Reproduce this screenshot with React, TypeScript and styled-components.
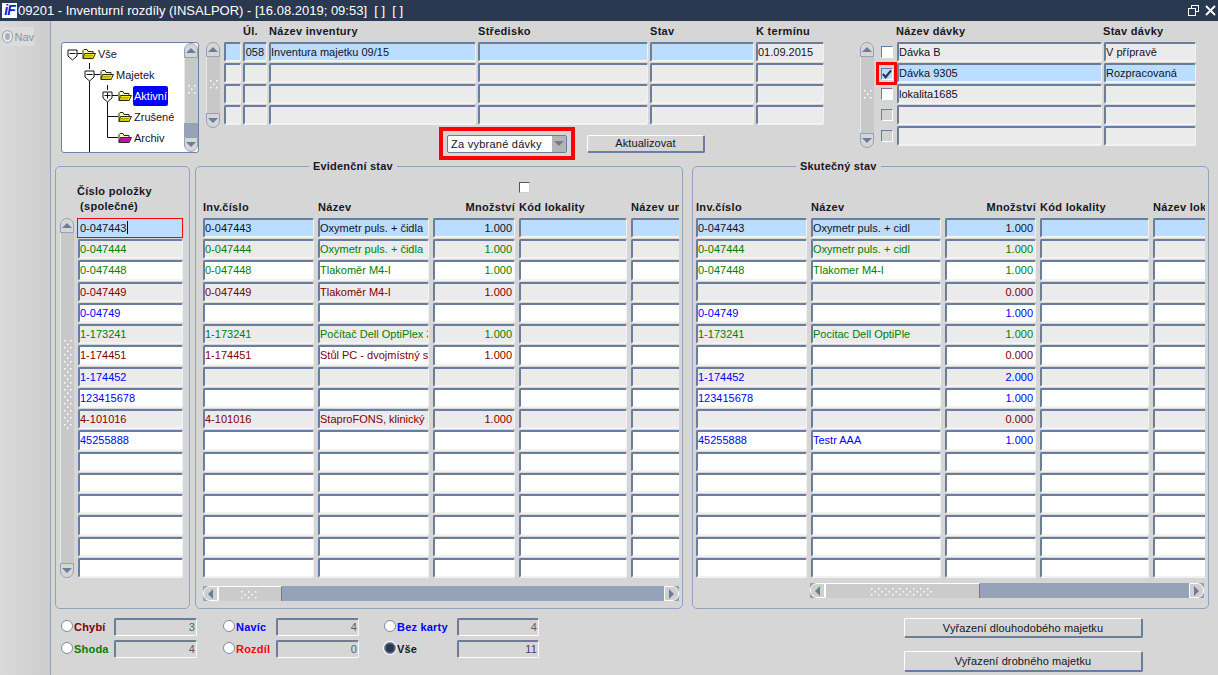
import React from "react";
import styled, { createGlobalStyle } from "styled-components";

const Global = createGlobalStyle`
  html, body { margin: 0; padding: 0; background: #d6d6d6; overflow: hidden; }
  body { font-family: "Liberation Sans", Arial, sans-serif; font-size: 11px; color: #12121e; }
  * { box-sizing: border-box; }
`;

const Frame = styled.div`width: 1218px; height: 675px; display: flex; flex-direction: column; overflow: hidden;`;

const TitleBar = styled.header`
  height: 21px; background: #2a3950; color: #fff; display: flex; align-items: center;
  padding: 0 2px 0 2px; font-size: 13px; white-space: pre;
`;
const Logo = styled.span`
  width: 15px; height: 15px; background: #fff; color: #0a1fd0; font: italic 700 14px/15px "Liberation Sans", sans-serif;
  text-align: center; margin-right: 1px; letter-spacing: -1px; overflow: hidden;
`;
const TitleText = styled.span`flex: 1;`;
const WinIcons = styled.div`display: flex; align-items: center; gap: 6px;`;

const Body = styled.div`flex: 1; display: flex; min-height: 0;`;
const Sidebar = styled.aside`
  width: 51px; background: linear-gradient(90deg, #d9d9d9, #cdcdcd); border-right: 1px solid #93a2b8; padding: 6px 0 0 2px;
`;
const NavItem = styled.div`
  width: 32px; height: 19px; background: #dcdcdc; display: flex; align-items: center; gap: 2px; color: #8593aa; padding-left: 1px;
`;
const NavDot = styled.span`
  width: 11px; height: 11px; border-radius: 50%; background: #a9b1bd; border: 2px solid #e9e9e9; box-shadow: 0 0 0 1px #a0a8b4;
`;

const Main = styled.main`flex: 1; padding-left: 4px; min-width: 0;`;
const Top = styled.section`height: 138px; display: flex; align-items: flex-start; padding-left: 6px;`;

const Tree = styled.div`
  position: relative; width: 138px; height: 111px; margin-top: 21px; background: #fff; border: 1px solid #6f819d; border-radius: 3px;
  display: flex; overflow: hidden;
`;
const TreeList = styled.div`flex: 1;`;
const TreeRow = styled.div<{ $depth: number }>`
  height: 21px; display: flex; align-items: center; gap: 1px; padding-left: ${p => 20 + p.$depth * 18}px; position: relative; z-index: 1;
`;
const TreeLabel = styled.span<{ $active?: boolean }>`
  font-size: 11px; line-height: 20px; height: 20px; padding: 0 1px; border-radius: 2px;
  background: ${p => (p.$active ? "#0000ff" : "transparent")}; color: ${p => (p.$active ? "#fff" : "#14141e")};
`;
const TreeLines = styled.svg`position: absolute; left: 0; top: 0; z-index: 2; pointer-events: none;`;

const Center = styled.div`width: 619px; margin-left: 7px; display: flex; flex-direction: column;`;
const Batches = styled.div`width: 337px; margin-left: 35px;`;
const HeadRow = styled.div<{ $cols: string; $gap?: number; $ml?: number }>`
  display: grid; grid-template-columns: ${p => p.$cols}; column-gap: ${p => p.$gap ?? 4}px; margin-left: ${p => p.$ml ?? 0}px;
  overflow: hidden; white-space: nowrap; height: 14px; line-height: 14px;
`;
const TopHead = styled(HeadRow)`margin-top: 3px; margin-bottom: 4px;`;
const ColTitle = styled.span<{ $right?: boolean }>`
  font-weight: 700; font-size: 11px; letter-spacing: 0.3px; color: #17171f; text-align: ${p => (p.$right ? "right" : "left")};
`;
const WithBar = styled.div<{ $gap: number }>`display: flex; align-items: flex-start; gap: ${p => p.$gap}px;`;
const Rows = styled.div<{ $cols: string; $gap?: number; $rowGap?: number }>`
  display: grid; grid-template-columns: ${p => p.$cols}; column-gap: ${p => p.$gap ?? 4}px; row-gap: ${p => p.$rowGap ?? 1}px;
  grid-auto-rows: 20px; overflow: hidden;
`;
const BatchRows = styled(Rows)`overflow: visible;`;
const TallRows = styled(Rows)`height: 360px; grid-auto-rows: 1fr; row-gap: 1.2px;`;
const ItemRows = styled(TallRows)`overflow: visible;`;

type Tone = "sel" | "gray" | "white" | "focus";
const toneBg: Record<Tone, string> = { sel: "#bbddff", gray: "#ebebeb", white: "#ffffff", focus: "#bbddff" };
const Cell = styled.div<{ $tone: Tone; $color?: string; $right?: boolean }>`
  background: ${p => toneBg[p.$tone]}; color: ${p => p.$color ?? "#12121e"};
  border-style: solid; border-width: 2px 1px 2px 2px; border-radius: 2px;
  border-color: #6a7d9b #f2f2f2 #f2f2f2 #6a7d9b;
  padding: 0 2px 0 0; font-size: 11px; line-height: 16px; white-space: nowrap; overflow: hidden;
  text-align: ${p => (p.$right ? "right" : "left")}; min-width: 0;
  ${p => p.$tone === "focus" ? "border: 1px solid #ff0000; border-radius: 0; padding: 1px 2px; line-height: 16px; margin-left: -1px;" : ""}
`;
const Caret = styled.span`display: inline-block; width: 1px; height: 13px; background: #000; vertical-align: -2px;`;

const Actions = styled.div`display: flex; align-items: center; margin: -1px 0 0 233px;`;
const RedFrame = styled.div`
  width: 136px; height: 33px; border: 4px solid #ff0000; display: flex; align-items: center; justify-content: center; background: #d6d6d6;
`;
const Select = styled.div`
  width: 120px; height: 18px; background: #fff; border: 1px solid #6a7d9b; border-radius: 2px; display: flex; align-items: center;
  padding-left: 3px; font-size: 11px; letter-spacing: 0.25px;
`;
const SelectText = styled.span`flex: 1;`;
const SelectArrow = styled.span`
  width: 14px; height: 100%; background: #b4b4b4; display: flex; align-items: center; justify-content: center;
`;
const Button = styled.button<{ $w: number; $h: number }>`
  width: ${p => p.$w}px; height: ${p => p.$h}px; background: #d6d6d6; color: #14141e; padding: 0;
  font: 11px "Liberation Sans", Arial, sans-serif; letter-spacing: 0.1px;
  border-style: solid; border-width: 1px 2px 2px 1px; border-color: #fff #6a7d9b #6a7d9b #fff; border-radius: 2px;
`;
const UpdateButton = styled(Button)`margin-left: 12px;`;

const CheckCol = styled.div`display: flex; align-items: center; justify-content: center; height: 20px; position: relative;`;
const RedCheck = styled.div`
  position: absolute; left: -3px; top: -1px; width: 21px; height: 23px; border: 3px solid #ff0000;
  display: flex; align-items: center; justify-content: center;
`;
const Check = styled.span<{ $off?: boolean; $sel?: boolean }>`
  width: 12px; height: 12px; display: inline-flex; align-items: center; justify-content: center;
  background: ${p => (p.$off ? "#d2d2d2" : p.$sel ? "#bbddff" : "#fff")};
  border-style: solid; border-width: 1px; border-color: #6a7d9b #fff #fff #6a7d9b;
`;

const PanelRow = styled.div`display: flex; height: 450px;`;
const Panel = styled.fieldset<{ $w: number; $ml?: number; $pl: number }>`
  width: ${p => p.$w}px; margin: 0 0 0 ${p => p.$ml ?? 0}px; padding: 0 0 0 ${p => p.$pl}px; min-width: 0;
  border: 1px solid #93a2b8; border-radius: 5px; height: 450px;
`;
const Legend = styled.legend<{ $left?: number }>`
  height: 14px; line-height: 15px; margin-left: ${p => p.$left ?? 0}px; padding: 0 ${p => (p.$left ? 4 : 0)}px;
  font-weight: 700; font-size: 11px; letter-spacing: 0.2px; color: #17171f;
`;
const PanelHead = styled.div`height: 45px; display: flex; flex-direction: column; justify-content: flex-end; padding-bottom: 4px;`;
const ItemHead = styled.div`
  margin-left: 17px; font-weight: 700; font-size: 11px; letter-spacing: 0.3px; line-height: 15px; color: #17171f;
`;
const ItemSub = styled.div`margin-left: 3px;`;
const HeadCheck = styled.span`
  width: 11px; height: 11px; background: #fff; border: 1px solid #555; border-right-color: #ccc; border-bottom-color: #ccc; margin: 0 0 7px 316px; display: block;
`;
const Clip = styled.div<{ $w: number }>`width: ${p => p.$w}px; overflow: hidden;`;

const HBar = styled.div<{ $w: number; $mt: number; $ml?: number }>`
  width: ${p => p.$w}px; height: 15px; margin: ${p => p.$mt}px 0 0 ${p => p.$ml ?? 0}px; background: #94a3b8; display: flex;
`;
const HBtn = styled.span<{ $side: "l" | "r" }>`
  width: 15px; background: #cfcfcf; display: flex; align-items: center; justify-content: center;
  border: 1px solid #fff; ${p => (p.$side === "l" ? "border-radius: 7px 0 0 7px;" : "border-radius: 0 7px 7px 0; margin-left: auto;")}
`;
const HThumb = styled.span<{ $w: number }>`
  width: ${p => p.$w}px; background: #cbcbcb; border-top: 1px solid #fff; border-left: 1px solid #fff; border-right: 1px solid #6a7d9b;
  display: flex; align-items: center; justify-content: center;
`;

const VBar = styled.div<{ $h: number }>`width: 14px; height: ${p => p.$h}px; display: flex; flex-direction: column; flex: none;`;
const VBtn = styled.span<{ $side: "u" | "d" }>`
  height: 15px; flex: none; background: #d6d6d6; display: flex; align-items: center; justify-content: center;
  border: 1px solid #93a2b8; ${p => (p.$side === "u" ? "border-radius: 7px 7px 0 0;" : "border-radius: 0 0 7px 7px;")}
`;
const VThumb = styled.span<{ $lift?: number }>`
  flex: 1; background: #c8c8c8; display: flex; align-items: center; justify-content: center; border-left: 1px solid #e8e8e8;
  padding-bottom: ${p => p.$lift ?? 0}px;
`;
const VRest = styled.span<{ $h: number }>`height: ${p => p.$h}px; background: #94a3b8; flex: none;`;
const TreeBar = styled.div`margin: 0 0 0 auto;`;

const Bottom = styled.section`display: flex; align-items: flex-start; padding: 9px 0 0 6px;`;
const Stats = styled.div`display: grid; grid-template-columns: 162px 161px 155px; row-gap: 4px; grid-auto-rows: 18px;`;
const Stat = styled.div`display: flex; align-items: center;`;
const Radio = styled.span<{ $on?: boolean }>`
  width: 12px; height: 12px; border-radius: 50%; flex: none; background: ${p => (p.$on ? "#2a3950" : "#fff")}; margin-bottom: 2px;
  border: 1px solid #7c8ba3; ${p => (p.$on ? "box-shadow: inset 0 0 0 1px #55647c, 0 0 0 1px #fff;" : "")}
`;
const StatLabel = styled.span<{ $color: string; $w: number }>`
  width: ${p => p.$w}px; margin: 0 0 1px 1px; color: ${p => p.$color}; font-weight: 700; font-size: 11px; letter-spacing: 0.2px;
`;
const StatValue = styled.span<{ $color?: string }>`
  width: 83px; height: 18px; text-align: right; padding-right: 1px; line-height: 14px; color: ${p => p.$color ?? "#5c5c66"};
  border-style: solid; border-width: 2px 1px 1px 2px; border-color: #6a7d9b #fff #fff #6a7d9b; border-radius: 2px; letter-spacing: 0.2px;
`;
const ActionStack = styled.div`display: flex; flex-direction: column; gap: 13px; margin-left: 365px;`;

const Arrow = ({ dir }: { dir: "u" | "d" | "l" | "r" }) => {
  const pts = { u: "0,6 10,6 5,1", d: "0,1 10,1 5,6", l: "6,0 6,10 1,5", r: "1,0 1,10 6,5" }[dir];
  const horiz = dir === "l" || dir === "r";
  return (
    <svg width={horiz ? 7 : 10} height={horiz ? 10 : 7} viewBox={horiz ? "0 0 7 10" : "0 0 10 7"}>
      <polygon points={pts} fill="#6a7d9b" />
    </svg>
  );
};

const Grip = ({ n, horizontal }: { n: number; horizontal?: boolean }) => {
  const dots: React.ReactElement[] = [];
  for (let i = 0; i < n; i++) {
    const a = 1 + i * 3.5;
    const b = i % 2 === 0 ? 1 : 4;
    const b2 = i % 2 === 0 ? 7 : -9;
    [b, b2].forEach((v, k) => {
      if (v < 0) return;
      const x = horizontal ? a : v;
      const y = horizontal ? v : a;
      dots.push(<rect key={`${i}-${k}`} x={x} y={y} width={1.5} height={1.5} fill="#fff" />);
    });
  }
  const long = n * 3.5 + 2;
  return <svg width={horizontal ? long : 9} height={horizontal ? 9 : long}><g>{dots}</g></svg>;
};

const VScroll = ({ h, grip, rest = 0, lift }: { h: number; grip: number; rest?: number; lift?: number }) => (
  <VBar $h={h}>
    <VBtn $side="u"><Arrow dir="u" /></VBtn>
    <VThumb $lift={lift}><Grip n={grip} /></VThumb>
    {rest > 0 && <VRest $h={rest} />}
    <VBtn $side="d"><Arrow dir="d" /></VBtn>
  </VBar>
);

const HScroll = ({ w, mt, ml, thumb, grip }: { w: number; mt: number; ml?: number; thumb: number; grip: number }) => (
  <HBar $w={w} $mt={mt} $ml={ml}>
    <HBtn $side="l"><Arrow dir="l" /></HBtn>
    <HThumb $w={thumb}><Grip n={grip} horizontal /></HThumb>
    <HBtn $side="r"><Arrow dir="r" /></HBtn>
  </HBar>
);

const Folder = ({ fill }: { fill: string }) => (
  <svg width="14" height="12" viewBox="0 0 14 12">
    <path d="M1 2.5 L1 10.5 L11 10.5 L11 3.5 L6 3.5 L5 1.5 L2 1.5 Z" fill="#fff8c0" stroke="#2a2a10" />
    <path d="M2.5 5.5 L13.5 5.5 L11 10.5 L1 10.5 Z" fill={fill} stroke="#2a2a10" />
    <path d="M3.5 7.5 H11.5 M2.5 9 H10.5" stroke="#333" strokeWidth="0.8" strokeDasharray="1 1" />
  </svg>
);

const Toggle = ({ x, y, plus }: { x: number; y: number; plus?: boolean }) => (
  <g transform={`translate(${x} ${y})`}>
    <path d="M-4.5 -4.5 H4.5 V1.5 L0 5.5 L-4.5 1.5 Z" fill="#fff" stroke="#111" />
    <path d={plus ? "M-3 -1 H3 M0 -4 V2" : "M-3 -1 H3"} stroke="#111" />
  </g>
);

const treeNodes = [
  { depth: 0, label: "Vše", fill: "#ffee00" },
  { depth: 1, label: "Majetek", fill: "#ffee00" },
  { depth: 2, label: "Aktivní", fill: "#ffee00", active: true },
  { depth: 2, label: "Zrušené", fill: "#ffee00" },
  { depth: 2, label: "Archiv", fill: "#e010c8" },
];

const G = "#008000", R = "#800000", B = "#0000ff";
const items: { id: string; c?: string; e: string[]; s: string[] }[] = [
  { id: "0-047443", e: ["0-047443", "Oxymetr puls. + čidla", "1.000"], s: ["0-047443", "Oxymetr puls. + cidl", "1.000"] },
  { id: "0-047444", c: G, e: ["0-047444", "Oxymetr puls. + čidla", "1.000"], s: ["0-047444", "Oxymetr puls. + cidl", "1.000"] },
  { id: "0-047448", c: G, e: ["0-047448", "Tlakoměr M4-I", "1.000"], s: ["0-047448", "Tlakomer M4-I", "1.000"] },
  { id: "0-047449", c: R, e: ["0-047449", "Tlakoměr M4-I", "1.000"], s: ["", "", "0.000"] },
  { id: "0-04749", c: B, e: ["", "", ""], s: ["0-04749", "", "1.000"] },
  { id: "1-173241", c: G, e: ["1-173241", "Počítač Dell OptiPlex 3020", "1.000"], s: ["1-173241", "Pocitac Dell OptiPle", "1.000"] },
  { id: "1-174451", c: R, e: ["1-174451", "Stůl PC - dvojmístný stůl", "1.000"], s: ["", "", "0.000"] },
  { id: "1-174452", c: B, e: ["", "", ""], s: ["1-174452", "", "2.000"] },
  { id: "123415678", c: B, e: ["", "", ""], s: ["123415678", "", "1.000"] },
  { id: "4-101016", c: R, e: ["4-101016", "StaproFONS, klinický systém", "1.000"], s: ["", "", "0.000"] },
  { id: "45255888", c: B, e: ["", "", ""], s: ["45255888", "Testr AAA", "1.000"] },
  ...Array.from({ length: 6 }, () => ({ id: "", e: ["", "", ""], s: ["", "", ""] })),
];
const toneOf = (i: number): Tone => (i === 0 ? "sel" : i < 11 && i % 2 === 1 ? "gray" : "white");

const inventoryCols = "17px 24px 207px 170px 104px 68px";
const batchCols = "16px 205px 92px";
const batches = [
  { name: "Dávka B", state: "V přípravě" },
  { name: "Dávka 9305", state: "Rozpracovaná", sel: true },
  { name: "lokalita1685", state: "" },
  { name: "", state: "", off: true },
  { name: "", state: "", off: true },
];

const DataHead = ({ cols, title5 }: { cols: string; title5: string }) => (
  <HeadRow $cols={cols}>
    <ColTitle>Inv.číslo</ColTitle>
    <ColTitle>Název</ColTitle>
    <ColTitle $right>Množství</ColTitle>
    <ColTitle>Kód lokality</ColTitle>
    <ColTitle>{title5}</ColTitle>
  </HeadRow>
);

const DataRows = ({ cols, which }: { cols: string; which: "e" | "s" }) => (
  <TallRows $cols={cols}>
    {items.map((it, i) => {
      const t = toneOf(i);
      return (
        <React.Fragment key={i}>
          <Cell $tone={t} $color={it.c}>{it[which][0]}</Cell>
          <Cell $tone={t} $color={it.c}>{it[which][1]}</Cell>
          <Cell $tone={t} $color={it.c} $right>{it[which][2]}</Cell>
          <Cell $tone={t} />
          <Cell $tone={t} />
        </React.Fragment>
      );
    })}
  </TallRows>
);

const stats = [
  { label: "Chybí", color: "#800000", w: 40, value: "3" },
  { label: "Navíc", color: "#0000ff", w: 40, value: "4" },
  { label: "Bez karty", color: "#0000ff", w: 60, value: "4" },
  { label: "Shoda", color: "#008000", w: 40, value: "4" },
  { label: "Rozdíl", color: "#ff0000", w: 40, value: "0" },
  { label: "Vše", color: "#17171f", w: 60, value: "11", on: true, vc: "#4a3a70" },
];

const p2Cols = "111px 111px 82px 108px 60px";
const p3Cols = "111px 130px 91px 109px 60px";

export default function App() {
  return (
    <Frame>
      <Global />
      <TitleBar>
        <Logo>iF</Logo>
        <TitleText>09201 - Inventurní rozdíly (INSALPOR) - [16.08.2019; 09:53]  [ ]  [ ]</TitleText>
        <WinIcons>
          <svg width="11" height="11" viewBox="0 0 11 11" fill="none" stroke="#fff">
            <rect x="3.5" y="0.5" width="7" height="6" />
            <rect x="0.5" y="3.5" width="7" height="7" fill="#2a3950" />
          </svg>
          <svg width="11" height="11" viewBox="0 0 11 11" stroke="#fff" strokeWidth="1.8">
            <path d="M1 1 L10 10 M10 1 L1 10" />
          </svg>
        </WinIcons>
      </TitleBar>
      <Body>
        <Sidebar>
          <NavItem><NavDot />Nav</NavItem>
        </Sidebar>
        <Main>
          <Top>
            <Tree>
              <TreeLines width="138" height="111">
                <path d="M27.5 20 V26 M27.5 38 V111 M45.5 42 V47 M45.5 59 V94.5 H56 M45.5 73.5 H56 M15 10.5 H20 M32 31.5 H38 M50 52.5 H56" stroke="#111" fill="none" />
                <Toggle x={10.5} y={11.5} />
                <Toggle x={27.5} y={32.5} />
                <Toggle x={45.5} y={53.5} plus />
              </TreeLines>
              <TreeList>
                {treeNodes.map(n => (
                  <TreeRow key={n.label} $depth={n.depth}>
                    <Folder fill={n.fill} />
                    <TreeLabel $active={n.active}>{n.label}</TreeLabel>
                  </TreeRow>
                ))}
              </TreeList>
              <TreeBar><VScroll h={109} grip={3} rest={14} /></TreeBar>
            </Tree>
            <Center>
              <TopHead $cols={inventoryCols} $gap={2} $ml={18}>
                <span />
                <ColTitle>Úl.</ColTitle>
                <ColTitle>Název inventury</ColTitle>
                <ColTitle>Středisko</ColTitle>
                <ColTitle>Stav</ColTitle>
                <ColTitle>K termínu</ColTitle>
              </TopHead>
              <WithBar $gap={4}>
                <VScroll h={86} grip={3} />
                <Rows $cols={inventoryCols} $gap={2}>
                  {[0, 1, 2, 3].map(i => {
                    const t: Tone = i === 0 ? "sel" : "gray";
                    const v = i === 0 ? ["", "058", "Inventura majetku 09/15", "", "", "01.09.2015"] : ["", "", "", "", "", ""];
                    return (
                      <React.Fragment key={i}>
                        {v.map((txt, k) => (
                          <Cell key={k} $tone={k === 5 && i === 0 ? "gray" : t} $right={k === 1}>{txt}</Cell>
                        ))}
                      </React.Fragment>
                    );
                  })}
                </Rows>
              </WithBar>
              <Actions>
                <RedFrame>
                  <Select>
                    <SelectText>Za vybrané dávky</SelectText>
                    <SelectArrow><Arrow dir="d" /></SelectArrow>
                  </Select>
                </RedFrame>
                <UpdateButton $w={118} $h={18}>Aktualizovat</UpdateButton>
              </Actions>
            </Center>
            <Batches>
              <TopHead $cols={batchCols} $gap={2} $ml={18}>
                <span />
                <ColTitle>Název dávky</ColTitle>
                <ColTitle>Stav dávky</ColTitle>
              </TopHead>
              <WithBar $gap={5}>
                <VScroll h={106} grip={3} />
                <BatchRows $cols={batchCols} $gap={2}>
                  {batches.map((b, i) => {
                    const t: Tone = b.sel ? "sel" : "gray";
                    return (
                      <React.Fragment key={i}>
                        <CheckCol>
                          {b.sel ? (
                            <RedCheck>
                              <Check $sel>
                                <svg width="11" height="10" viewBox="0 0 11 10">
                                  <path d="M1 5 L4 8.5 L10 1" fill="none" stroke="#2a3950" strokeWidth="2.4" />
                                </svg>
                              </Check>
                            </RedCheck>
                          ) : (
                            <Check $off={b.off} />
                          )}
                        </CheckCol>
                        <Cell $tone={t}>{b.name}</Cell>
                        <Cell $tone={t}>{b.state}</Cell>
                      </React.Fragment>
                    );
                  })}
                </BatchRows>
              </WithBar>
            </Batches>
          </Top>
          <PanelRow>
            <Panel $w={135} $pl={4}>
              <Legend />
              <PanelHead>
                <ItemHead>
                  Číslo položky
                  <ItemSub>(společné)</ItemSub>
                </ItemHead>
              </PanelHead>
              <WithBar $gap={4}>
                <VScroll h={360} grip={26} lift={26} />
                <ItemRows $cols="105px">
                  {items.map((it, i) => (
                    <Cell key={i} $tone={i === 0 ? "focus" : toneOf(i)} $color={it.c}>
                      {it.id}
                      {i === 0 && <Caret />}
                    </Cell>
                  ))}
                </ItemRows>
              </WithBar>
            </Panel>
            <Panel $w={488} $ml={5} $pl={7}>
              <Legend $left={106}>Evidenční stav</Legend>
              <PanelHead>
                <HeadCheck />
                <Clip $w={476}><DataHead cols={p2Cols} title5="Název um" /></Clip>
              </PanelHead>
              <Clip $w={476}><DataRows cols={p2Cols} which="e" /></Clip>
              <HScroll w={476} mt={8} thumb={64} grip={5} />
            </Panel>
            <Panel $w={517} $ml={9} $pl={3}>
              <Legend $left={100}>Skutečný stav</Legend>
              <PanelHead>
                <Clip $w={509}><DataHead cols={p3Cols} title5="Název lok" /></Clip>
              </PanelHead>
              <Clip $w={509}><DataRows cols={p3Cols} which="s" /></Clip>
              <HScroll w={394} mt={5} ml={114} thumb={155} grip={18} />
            </Panel>
          </PanelRow>
          <Bottom>
            <Stats>
              {stats.map(s => (
                <Stat key={s.label}>
                  <Radio $on={s.on} />
                  <StatLabel $color={s.color} $w={s.w}>{s.label}</StatLabel>
                  <StatValue $color={s.vc}>{s.value}</StatValue>
                </Stat>
              ))}
            </Stats>
            <ActionStack>
              <Button $w={239} $h={20}>Vyřazení dlouhodobého majetku</Button>
              <Button $w={239} $h={21}>Vyřazení drobného majetku</Button>
            </ActionStack>
          </Bottom>
        </Main>
      </Body>
    </Frame>
  );
}
